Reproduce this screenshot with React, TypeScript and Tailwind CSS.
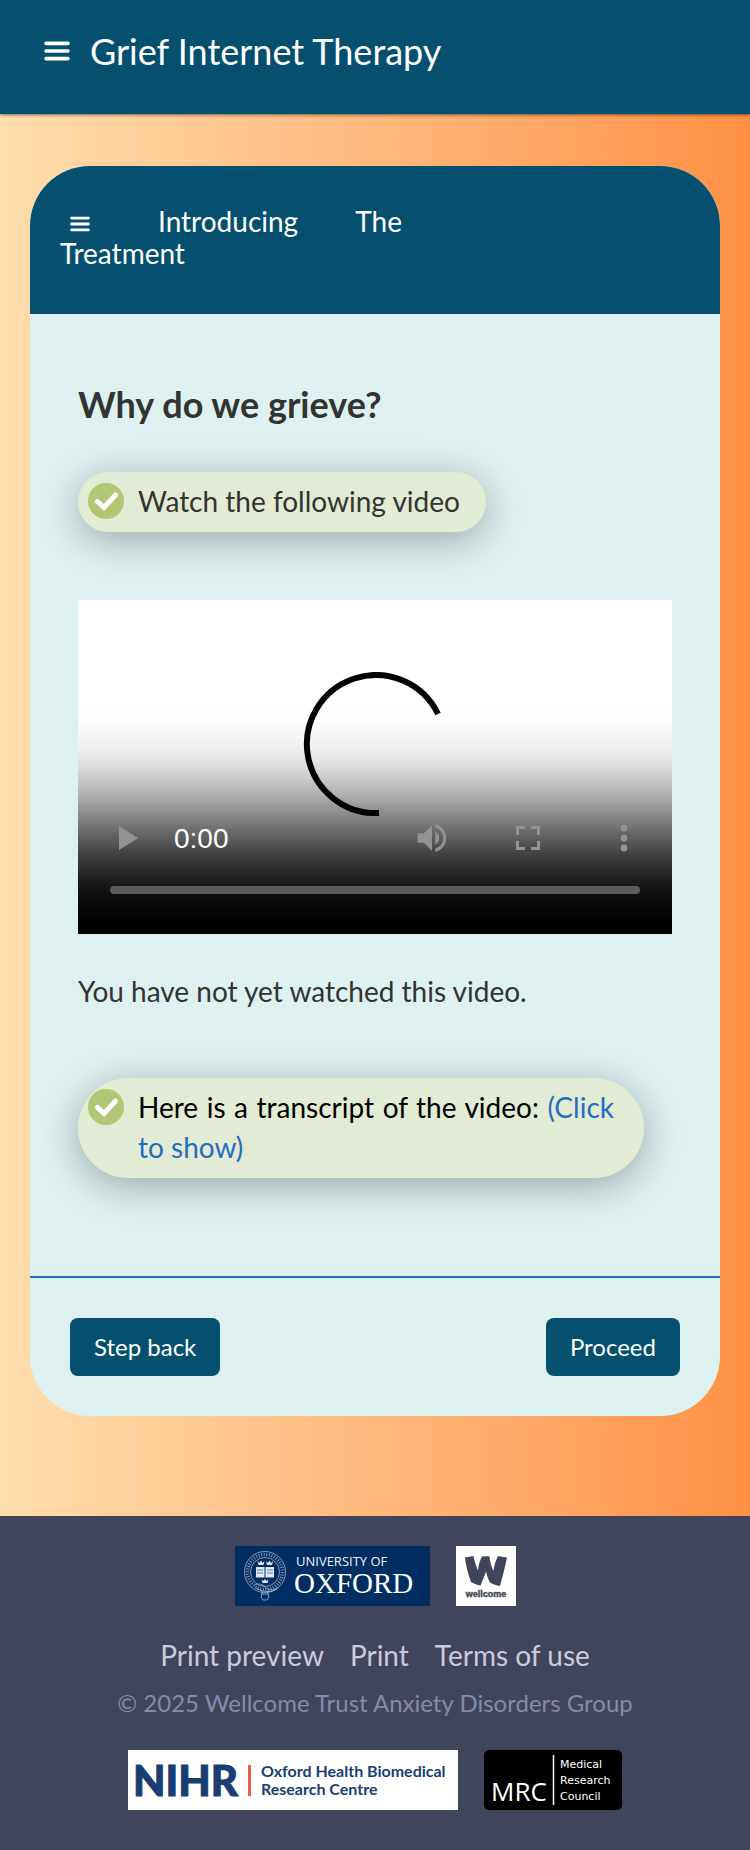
import React from 'react';

const MenuIcon: React.FC<{ className?: string }> = ({ className }) => (
  <svg viewBox="0 0 26 20" className={className} stroke="currentColor" strokeWidth="3.6" strokeLinecap="round" aria-hidden="true">
    <path d="M2 2.4H24M2 10H24M2 17.6H24" />
  </svg>
);

const TickIcon: React.FC = () => (
  <svg viewBox="0 0 36 36" className="mt-0.5 size-9 shrink-0" fill="none" aria-hidden="true">
    <circle cx="18" cy="18" r="18" fill="#b1c774" />
    <path d="M9.5 18.5L16 24.5L27.5 12" stroke="#fff" strokeWidth="5" strokeLinecap="round" />
  </svg>
);

const VideoPlayer: React.FC = () => (
  <div className="relative flex aspect-video w-full flex-col justify-end bg-white">
    <svg viewBox="0 0 144 144" className="absolute inset-x-0 top-18 mx-auto size-36" fill="none" aria-hidden="true">
      <path d="M135 42A69 69 0 1 0 76 141" stroke="#000" strokeWidth="6" />
    </svg>
    <div className="absolute inset-0 bg-[linear-gradient(to_bottom,rgba(0,0,0,0)_30%,rgba(0,0,0,0.01)_36%,rgba(0,0,0,0.03)_40%,rgba(0,0,0,0.07)_45%,rgba(0,0,0,0.14)_50%,rgba(0,0,0,0.24)_55%,rgba(0,0,0,0.35)_60%,rgba(0,0,0,0.48)_65%,rgba(0,0,0,0.6)_70%,rgba(0,0,0,0.72)_75%,rgba(0,0,0,0.82)_80%,rgba(0,0,0,0.9)_85%,rgba(0,0,0,0.96)_90%,#000_97%)]" />
    <div className="relative flex h-24 items-center text-[#929292]">
      <button type="button" aria-label="Play" className="flex w-24 justify-center">
        <svg viewBox="0 0 24 24" className="size-6" fill="currentColor">
          <path d="M5 0L24 12L5 24Z" />
        </svg>
      </button>
      <span className="flex-1 pt-0.5 font-['Liberation_Sans',sans-serif] text-[28px] text-white">0:00</span>
      <button type="button" aria-label="Mute" className="flex w-24 justify-center">
        <svg viewBox="2 2 20 20" className="size-8" fill="currentColor">
          <path d="M3 9v6h4l5 5V4L7 9H3zm13.5 3A4.5 4.5 0 0 0 14 7.97v8.05A4.5 4.5 0 0 0 16.5 12zM14 3.23v2.06a7 7 0 0 1 0 13.42v2.06a9 9 0 0 0 0-17.54z" />
        </svg>
      </button>
      <button type="button" aria-label="Full screen" className="flex w-24 justify-center">
        <svg viewBox="0 0 24 24" className="size-6" stroke="currentColor" strokeWidth="3" fill="none">
          <path d="M1.5 9V1.5H9M15 1.5H22.5V9M22.5 15V22.5H15M9 22.5H1.5V15" />
        </svg>
      </button>
      <button type="button" aria-label="More options" className="flex w-24 justify-center">
        <svg viewBox="0 0 8 28" className="h-7 w-2" fill="currentColor">
          <circle cx="4" cy="4" r="3.4" />
          <circle cx="4" cy="14" r="3.4" />
          <circle cx="4" cy="24" r="3.4" />
        </svg>
      </button>
    </div>
    <div className="relative mx-8 mb-10 h-2 rounded-full bg-[#5c5c5c]" />
  </div>
);

const OxfordLogo: React.FC = () => (
  <svg viewBox="0 0 195 60" className="h-15" role="img" aria-label="University of Oxford">
    <rect width="195" height="60" fill="#002d62" />
    <g fill="none" stroke="#b9c5d9" strokeWidth="0.7">
      <circle cx="30" cy="26" r="20.5" />
      <circle cx="30" cy="26" r="14.5" />
      <circle cx="30" cy="26" r="17.5" strokeWidth="3.5" strokeDasharray="1 1.6" stroke="#7f93b5" />
      <path d="M20 39C23 37 28 38 31 42C35 45 40 44 43 41M21 42C27 46 36 47 42 43M27 45V49M33 45V49" />
      <path d="M27 48L26 51L28 54H32L34 51L33 48Z" />
    </g>
    <path d="M21 21H29.5V31.5H21ZM30.5 21H39V31.5H30.5Z" fill="#dfe6f0" />
    <path d="M22 24H28M22 27H28M32 24H38M32 27H38" stroke="#40608f" strokeWidth="0.8" />
    <path d="M22.5 15L24.5 17L26 14.5L27.5 17L29.5 15L28.5 19H23.5ZM31 15L33 17L34.5 14.5L36 17L38 15L37 19H32ZM26.5 33.5L28.5 35L30 33L31.5 35L33.5 33.5L32.5 37H27.5Z" fill="#dfe6f0" />
    <text x="61" y="20" fill="#eef2f8" fontSize="13" fontFamily="'Open Sans', sans-serif">UNIVERSITY OF</text>
    <text x="59" y="47" fill="#fff" fontSize="29" fontFamily="'Liberation Serif', serif">OXFORD</text>
  </svg>
);

const WellcomeLogo: React.FC = () => (
  <svg viewBox="0 0 60 60" className="size-15" role="img" aria-label="Wellcome">
    <rect width="60" height="60" fill="#fff" />
    <path d="M9 11.5C12 11 15 10.5 17.5 10C18.5 15 20 20 22 24.5C22.5 19 24 14 26 10.5C29 10 31 10 33.5 10.5C34 16 35.5 21 37.5 25C38 20 39.5 15 42 10C45 10.5 48 11 51 11.5C49 21 46.5 31 44 40C40.5 39.5 37 38.5 34 36.5C32 33 31 29.5 30 25.5C28.5 30 26.5 35 24.5 39.5C21 39 18 38 15 36C12 28 10 20 9 11.5Z" fill="#41455b" />
    <text x="30" y="51" textAnchor="middle" fill="#41455b" stroke="#41455b" strokeWidth="0.4" fontSize="9" fontWeight="700" fontFamily="'Liberation Sans', sans-serif">wellcome</text>
  </svg>
);

const NihrLogo: React.FC = () => (
  <svg viewBox="0 0 330 60" className="h-15" role="img" aria-label="NIHR Oxford Health Biomedical Research Centre">
    <rect width="330" height="60" fill="#fff" />
    <text x="5" y="46" fill="#193e72" stroke="#193e72" fontSize="42" fontWeight="900" fontFamily="Lato, sans-serif">NIHR</text>
    <rect x="120" y="15" width="3" height="31" fill="#ea5d4e" />
    <g fill="#193e72" fontSize="16" fontWeight="700" fontFamily="Lato, sans-serif">
      <text x="133" y="27">Oxford Health Biomedical</text>
      <text x="133" y="45">Research Centre</text>
    </g>
  </svg>
);

const MrcLogo: React.FC = () => (
  <svg viewBox="0 0 138 60" className="h-15" role="img" aria-label="MRC Medical Research Council">
    <rect width="138" height="60" rx="5" fill="#000" />
    <text x="7" y="51" fill="#fff" fontSize="26" fontFamily="'Open Sans', sans-serif">MRC</text>
    <path d="M69.5 5V55" stroke="#fff" strokeWidth="1.5" />
    <g fill="#fff" fontSize="11" fontFamily="'DejaVu Sans', sans-serif">
      <text x="76" y="18">Medical</text>
      <text x="76" y="34">Research</text>
      <text x="76" y="50">Council</text>
    </g>
  </svg>
);

const footerLinks = ['Print preview', 'Print', 'Terms of use'];

const App: React.FC = () => {
  return (
    <div className="flex min-h-screen flex-col bg-linear-to-r from-[#ffdead] to-[#ff9045] font-['Lato',sans-serif] text-[28px] leading-10 text-[#333]">
      <header className="flex items-center gap-5 bg-[#04506e] px-11 pt-7 pb-10 text-white shadow-[0_1px_3px_rgba(0,0,0,0.5)]">
        <button type="button" aria-label="Open menu">
          <MenuIcon className="h-5 w-6.5" />
        </button>
        <h1 className="text-4xl leading-[46px]">Grief Internet Therapy</h1>
      </header>

      <main className="mx-7.5 mt-13 mb-25 overflow-hidden rounded-[60px] bg-[#ddf1f0]">
        <div className="bg-[#04506e] px-7.5 pt-[39px] pb-[45px] text-white">
          <h2 className="w-[342px] text-justify leading-8">
            <button type="button" aria-label="Open module menu" className="mr-2.5 ml-2.5 inline-block">
              <MenuIcon className="h-4 w-5" />
            </button>{' '}
            Introducing The Treatment
          </h2>
        </div>

        <div className="px-12 pt-17 pb-24">
          <h3 className="text-4xl leading-11 font-bold">Why do we grieve?</h3>
          <p className="mt-11.5 flex w-fit gap-3.5 rounded-[50px] bg-[#e2ebd3] pt-[9px] pr-6.5 pb-[11px] pl-2.5 shadow-[0_8px_40px_rgba(0,0,0,0.3)]">
            <TickIcon />
            Watch the following video
          </p>
          <div className="mt-17">
            <VideoPlayer />
          </div>
          <p className="mt-[37px]">You have not yet watched this video.</p>
          <div className="mt-[67px] mr-7 flex gap-3.5 rounded-[50px] bg-[#e2ebd3] pt-[9px] pr-7.5 pb-[11px] pl-2.5 text-black shadow-[0_8px_40px_rgba(0,0,0,0.3)]">
            <TickIcon />
            <p className="text-justify">
              Here is a transcript of the video: <a href="#transcript" className="text-[#266cc0]">(Click to show)</a>
            </p>
          </div>
        </div>

        <div className="mt-0.5 flex justify-between border-t-2 border-[#266cc0] p-10 text-2xl text-white">
          <button type="button" className="h-[58px] rounded-lg bg-[#04506e] px-6">Step back</button>
          <button type="button" className="h-[58px] rounded-lg bg-[#04506e] px-6">Proceed</button>
        </div>
      </main>

      <footer className="mt-auto flex flex-col items-center bg-[#41455b] pt-7.5 pb-10">
        <div className="flex flex-wrap justify-center gap-6.5">
          <OxfordLogo />
          <WellcomeLogo />
        </div>
        <nav className="mt-[29px] flex flex-wrap justify-center gap-x-6.5">
          {footerLinks.map((label) => (
            <a key={label} href="#" className="text-[#cacbdb]">{label}</a>
          ))}
        </nav>
        <p className="mt-2 text-2xl leading-10 text-[#8689a8]">© 2025 Wellcome Trust Anxiety Disorders Group</p>
        <div className="mt-[27px] flex flex-wrap justify-center gap-6.5">
          <NihrLogo />
          <MrcLogo />
        </div>
      </footer>
    </div>
  );
};

export default App;
